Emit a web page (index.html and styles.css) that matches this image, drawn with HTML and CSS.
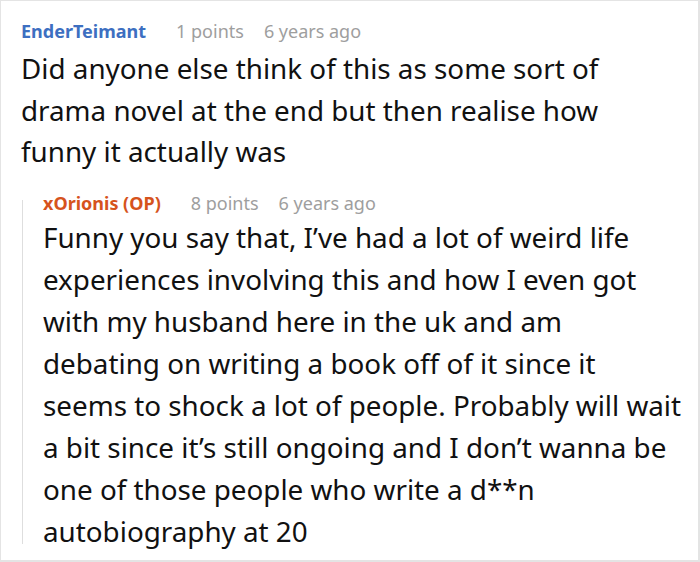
FILE: index.html
```html
<!DOCTYPE html>
<html>
<head>
<meta charset="utf-8">
<link rel="stylesheet" href="styles.css">
</head>
<body>
<div class="thread">
  <div class="comment">
    <div class="meta">
      <span class="user user-blue">EnderTeimant</span>
      <span class="points">1 points</span>
      <span class="time">6 years ago</span>
    </div>
    <p class="text">Did anyone else think of this as some sort of drama novel at the end but then realise how funny it actually was</p>
  </div>
  <div class="reply">
    <div class="meta meta-reply">
      <span class="user user-orange">xOrionis (OP)</span>
      <span class="points">8 points</span>
      <span class="time">6 years ago</span>
    </div>
    <p class="text">Funny you say that, I’ve had a lot of weird life experiences involving this and how I even got with my husband here in the uk and am debating on writing a book off of it since it seems to shock a lot of people. Probably will wait a bit since it’s still ongoing and I don’t wanna be one of those people who write a d**n autobiography at 20</p>
  </div>
</div>
</body>
</html>
```

FILE: styles.css
```css
html, body {
  margin: 0;
  padding: 0;
  background: #fff;
}
.thread {
  width: 700px;
  height: 562px;
  box-sizing: border-box;
  border: 1px solid #e4e4e4;
  border-right-width: 2px;
  border-bottom-width: 2px;
  padding: 20px 8px 0 20px;
  font-family: "Noto Sans", sans-serif;
  color: #111;
}
.meta {
  display: flex;
  align-items: baseline;
  font-size: 18px;
  line-height: 20px;
  height: 20px;
  white-space: nowrap;
}
.user {
  font-weight: 700;
  margin-right: 30px;
}
.user-blue { color: #3d6fc1; }
.user-orange { color: #d6531d; }
.points {
  color: #9e9e9e;
  margin-right: 20px;
}
.time { color: #9e9e9e; }
.text {
  margin: 0;
  font-size: 27.8px;
  line-height: 41.6px;
}
.comment .text {
  margin-top: 7px;
  max-width: 650px;
}
.reply {
  display: flex;
  flex-direction: column;
  margin-top: 27px;
  margin-left: 1px;
  border-left: 1px solid #dedede;
  padding-left: 20px;
}
.meta-reply {
  margin-top: -7px;
}
.reply .text {
  max-width: 640px;
  line-height: 42px;
  margin-top: 3px;
  margin-bottom: -8px;
}
```
